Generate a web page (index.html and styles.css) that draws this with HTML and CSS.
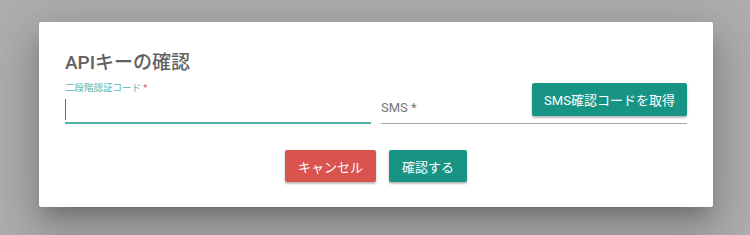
FILE: index.html
```html
<!DOCTYPE html>
<html lang="ja">
<head>
<meta charset="utf-8">
<link rel="stylesheet" href="styles.css">
</head>
<body>
<div class="dialog">
  <h2 class="title">APIキーの確認</h2>
  <div class="form-row">
    <div class="field field-code">
      <label class="label label-active">二段階認証コード <span class="req">*</span></label>
      <div class="input input-focus"><span class="caret"></span></div>
    </div>
    <div class="field field-sms">
      <div class="input input-sms">
        <span class="placeholder">SMS *</span>
        <button class="btn btn-teal btn-sms">SMS確認コードを取得</button>
      </div>
    </div>
  </div>
  <div class="actions">
    <button class="btn btn-red">キャンセル</button>
    <button class="btn btn-teal">確認する</button>
  </div>
</div>
</body>
</html>
```
FILE: styles.css
```css
html, body {
  margin: 0;
  padding: 0;
}
body {
  width: 750px;
  height: 235px;
  background: #adadad;
  font-family: Roboto, "Noto Sans CJK JP", sans-serif;
  overflow: hidden;
}
.dialog {
  box-sizing: border-box;
  margin: 22px 0 0 39px;
  width: 674px;
  height: 185px;
  background: #fff;
  border-radius: 2px;
  padding: 29px 26px 0 26px;
  box-shadow: 0 11px 15px -7px rgba(0,0,0,0.2), 0 24px 38px 3px rgba(0,0,0,0.14), 0 9px 46px 8px rgba(0,0,0,0.12);
}
.title {
  margin: 0;
  font-size: 19px;
  line-height: 24px;
  font-weight: 500;
  color: #616161;
}
.form-row {
  display: flex;
  gap: 10px;
  margin-top: 7px;
}
.field {
  display: flex;
  flex-direction: column;
}
.field-code {
  width: 306px;
}
.field-sms {
  flex: 1;
  justify-content: flex-end;
}
.label {
  font-size: 9.5px;
  line-height: 12px;
  height: 12px;
}
.label-active {
  color: #56b3a6;
}
.req {
  color: #e0524f;
}
.input {
  box-sizing: border-box;
  height: 30px;
  border-bottom: 1px solid #a8a8a8;
  display: flex;
  align-items: center;
}
.input-focus {
  border-bottom: 2px solid #4fb2a4;
  padding-top: 2px;
}
.caret {
  display: block;
  width: 1px;
  height: 21px;
  background: #2f7f73;
}
.input-sms {
  height: 41px;
  justify-content: space-between;
  align-items: flex-start;
}
.placeholder {
  font-size: 13px;
  color: #777;
  margin-top: 17px;
}
.btn {
  border: none;
  border-radius: 2px;
  color: #fff;
  font-family: Roboto, "Noto Sans CJK JP", sans-serif;
  font-size: 13px;
  font-weight: 400;
  height: 32px;
  padding: 0 13px;
  box-shadow: 0 2px 2px rgba(0,0,0,0.2), 0 1px 3px rgba(0,0,0,0.12);
  cursor: pointer;
}
.btn-teal {
  background: #179484;
}
.btn-red {
  background: #d9534f;
}
.btn-sms {
  height: 33px;
  width: 155px;
  padding: 0;
}
.actions {
  display: flex;
  justify-content: center;
  gap: 13px;
  margin-top: 26px;
}
```
